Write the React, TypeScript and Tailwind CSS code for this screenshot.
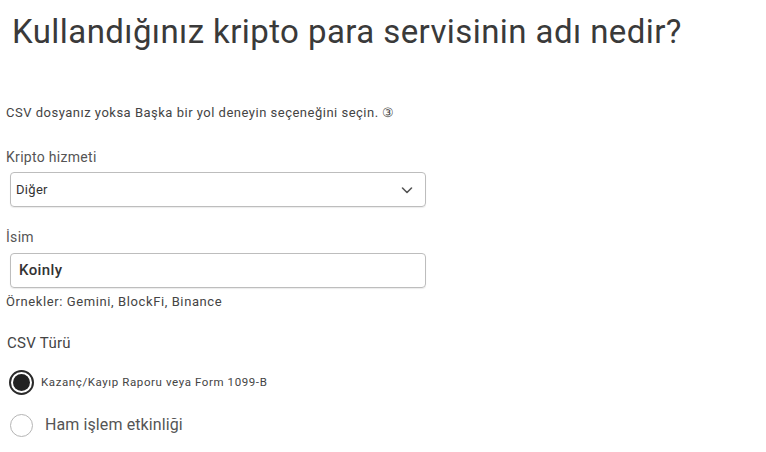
export default function App() {
  return (
    <div className="min-h-screen bg-white text-[#3c4043]" style={{ fontFamily: "Roboto, 'Noto Sans', sans-serif" }}>
      <h1 className="pl-3 pt-[10px] text-[33px] leading-[44px] tracking-[0.42px] text-[#3a3a3a]">
        Kullandığınız kripto para servisinin adı nedir?
      </h1>

      <p className="mt-[51px] pl-[6px] text-[13px] leading-4 tracking-[0.5px] text-[#444]">
        CSV dosyanız yoksa Başka bir yol deneyin seçeneğini seçin. <span className="text-[13px]">③</span>
      </p>

      <div className="mt-[28px] pl-[6px] text-[14px] leading-4 tracking-[0.3px] text-[#555]">Kripto hizmeti</div>
      <div className="ml-[10px] mt-[7px] flex h-[35px] w-[416px] items-center justify-between rounded-[4px] border border-[#bdbdbd] pl-[5px] pr-[11px] shadow-[0_1px_1px_rgba(0,0,0,0.08)]">
        <span className="text-[13px] tracking-[0.3px] text-[#333]">Diğer</span>
        <svg width="14" height="14" viewBox="0 0 14 14" fill="none" stroke="#555" strokeWidth="1.6" strokeLinecap="round" strokeLinejoin="round">
          <path d="M2.5 5l4.5 4.5L11.5 5" />
        </svg>
      </div>

      <div className="mt-[22px] pl-[6px] text-[14px] leading-4 tracking-[0.3px] text-[#555]">İsim</div>
      <div className="ml-[10px] mt-[8px] flex h-[35px] w-[416px] items-center rounded-[4px] border border-[#bdbdbd] pl-[8px] shadow-[0_1px_1px_rgba(0,0,0,0.08)]">
        <span className="text-[15px] font-medium tracking-[0.4px] text-[#333]">Koinly</span>
      </div>
      <div className="mt-[6px] pl-[6px] text-[13px] leading-4 tracking-[0.6px] text-[#444]">Örnekler: Gemini, BlockFi, Binance</div>

      <div className="mt-[23px] pl-[7px] text-[15px] leading-5 tracking-[0.3px] text-[#444]">CSV Türü</div>

      <div className="mt-[17px] flex items-center pl-[9px]">
        <span className="flex h-[25px] w-[25px] items-center justify-center rounded-full border-2 border-[#2a2a2a]">
          <span className="h-[17px] w-[17px] rounded-full bg-[#222]" />
        </span>
        <span className="ml-[7px] text-[11.5px] tracking-[0.6px] text-[#444]">Kazanç/Kayıp Raporu veya Form 1099-B</span>
      </div>

      <div className="mt-[18px] flex items-center pl-[10px]">
        <span className="h-[23px] w-[23px] rounded-full border-[1.5px] border-[#b5b5b5]" />
        <span className="ml-[12px] text-[16px] tracking-[0.1px] text-[#555]">Ham işlem etkinliği</span>
      </div>
    </div>
  )
}
